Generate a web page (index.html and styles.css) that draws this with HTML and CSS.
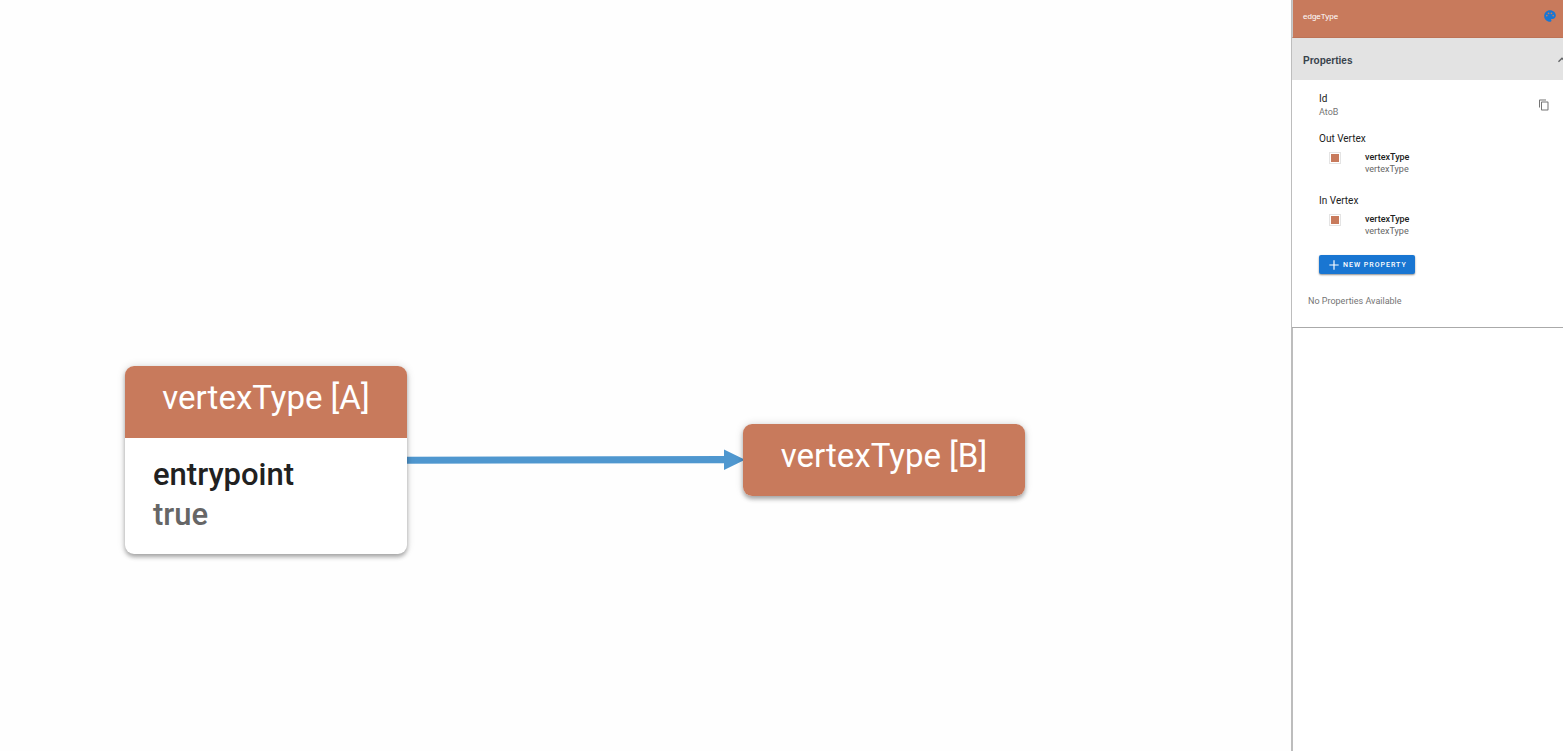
FILE: index.html
```html
<!DOCTYPE html>
<html lang="en">
<head>
<meta charset="utf-8">
<title>Graph editor</title>
<link rel="stylesheet" href="styles.css">
</head>
<body>
<main class="canvas">
  <svg class="edge" width="338" height="24" viewBox="0 0 338 24" aria-hidden="true">
    <path d="M0 8.700 317 8V1.500L338 11.700 317 22V15.200L0 15.800z" fill="#4f97cf"/>
  </svg>
  <article class="node node-a">
    <h2 class="node-title">vertexType [A]</h2>
    <dl class="node-body">
      <dt>entrypoint</dt>
      <dd>true</dd>
    </dl>
  </article>
  <article class="node node-b">
    <h2 class="node-title">vertexType [B]</h2>
  </article>
</main>
<aside class="panel">
  <header class="panel-header">
    <span>edgeType</span>
    <button class="icon-button" type="button" aria-label="Change color">
      <svg width="14" height="14" viewBox="0 0 24 24"><circle cx="12" cy="10" r="7" fill="#c87a5c"/><path fill="#1976d2" d="M12 2C6.490 2 2 6.490 2 12s4.490 10 10 10c1.380 0 2.500-1.120 2.500-2.500 0-.61-.23-1.200-.64-1.670-.08-.1-.13-.21-.13-.33 0-.28.22-.5.5-.5H16c3.310 0 6-2.690 6-6C22 6.040 17.510 2 12 2zm5.500 11c-.83 0-1.500-.67-1.500-1.500s.67-1.500 1.500-1.500 1.500.67 1.500 1.500-.67 1.500-1.500 1.500zm-3-4c-.83 0-1.500-.67-1.500-1.500S13.670 6 14.500 6s1.500.67 1.500 1.500S15.330 9 14.500 9zM5 11.500c0-.83.67-1.500 1.500-1.500s1.500.67 1.500 1.500S7.330 13 6.500 13 5 12.330 5 11.500zm6-4c0 .83-.67 1.500-1.500 1.500S8 8.330 8 7.500 8.670 6 9.500 6s1.500.67 1.500 1.500z"/></svg>
    </button>
  </header>
  <button class="section-toggle" type="button" aria-expanded="true">
    <span>Properties</span>
    <svg class="chevron" width="16" height="16" viewBox="0 0 24 24" fill="#5f6163"><path d="m12 8-6 6 1.410 1.410L12 10.830l4.590 4.580L18 14z"/></svg>
  </button>
  <section class="properties">
    <div class="id-row">
      <div>
        <h3 class="label">Id</h3>
        <p class="value">AtoB</p>
      </div>
      <button class="icon-button" type="button" aria-label="Copy id">
        <svg width="12" height="12" viewBox="0 0 24 24" fill="#757575"><path d="M16 1H4c-1.100 0-2 .9-2 2v14h2V3h12V1zm3 4H8c-1.100 0-2 .9-2 2v14c0 1.100.9 2 2 2h11c1.100 0 2-.9 2-2V7c0-1.100-.9-2-2-2zm0 16H8V7h11v14z"/></svg>
      </button>
    </div>
    <h3 class="label">Out Vertex</h3>
    <div class="vertex">
      <span class="swatch"></span>
      <div>
        <p class="vertex-name">vertexType</p>
        <p class="vertex-type">vertexType</p>
      </div>
    </div>
    <h3 class="label">In Vertex</h3>
    <div class="vertex">
      <span class="swatch"></span>
      <div>
        <p class="vertex-name">vertexType</p>
        <p class="vertex-type">vertexType</p>
      </div>
    </div>
    <button class="new-property" type="button">
      <svg width="14" height="14" viewBox="0 0 24 24" fill="#fff"><path d="M20 13h-7v7h-2v-7H4v-2h7V4h2v7h7z"/></svg>
      <span>New Property</span>
    </button>
    <p class="empty">No Properties Available</p>
  </section>
  <div class="panel-rest"></div>
</aside>
</body>
</html>
```
FILE: styles.css
```css
* {
  box-sizing: border-box;
}

body {
  display: flex;
  min-height: 100vh;
  margin: 0;
  background: #fff;
  color: #212121;
  font-family: Roboto, sans-serif;
}

h2, h3, p, dl, dd {
  margin: 0;
}

button {
  padding: 0;
  border: 0;
  background: none;
  font: inherit;
}

svg {
  display: block;
  flex: none;
}

.canvas {
  position: relative;
  flex: 1;
  min-width: 0;
  overflow: hidden;
  background: #fefefe;
}

.edge {
  position: absolute;
  top: 448px;
  left: 407px;
}

.node {
  position: absolute;
  width: 282px;
  overflow: hidden;
  border-radius: 9px;
  background: #fff;
  box-shadow: 0 3px 4px rgba(0, 0, 0, .3), 0 0 8px rgba(0, 0, 0, .14);
}

.node-a {
  top: 366px;
  left: 125px;
}

.node-b {
  top: 424px;
  left: 743px;
}

.node-title {
  height: 72px;
  padding-top: 12px;
  background: #c87a5c;
  color: #fff;
  font-size: 33px;
  font-weight: 400;
  line-height: 39px;
  text-align: center;
}

.node-body {
  padding: 17px 28px 19px;
  font-size: 31px;
  font-weight: 500;
  line-height: 40px;
}

.node-body dd {
  color: #666;
}

.panel {
  display: flex;
  flex: 0 0 272px;
  flex-direction: column;
  overflow: hidden;
  border-left: 1px solid #bdbdbd;
}

.panel-header {
  display: flex;
  align-items: center;
  justify-content: space-between;
  height: 38px;
  padding: 0 6px 5px 10px;
  border-left: 1px solid #c8c8c8;
  border-bottom: 1px solid #bd7357;
  background: #c87a5c;
  color: #fff;
  font-family: "Liberation Sans", Arial, sans-serif;
  font-size: 8px;
}

.section-toggle {
  display: flex;
  align-items: center;
  justify-content: space-between;
  height: 42px;
  padding: 2px 0 0 11px;
  background: #e3e3e3;
  color: #37424c;
  font-family: "Liberation Sans", Arial, sans-serif;
  font-size: 10px;
  font-weight: 700;
}

.chevron {
  margin-right: -7px;
}

.properties {
  padding: 12px 13px 19px 27px;
  border-bottom: 1px solid #aaa;
}

.id-row {
  display: flex;
  align-items: center;
  justify-content: space-between;
  margin-bottom: 14px;
}

.label {
  font-size: 10px;
  font-weight: 400;
  line-height: 14px;
}

.value {
  color: #757575;
  font-size: 9px;
  line-height: 12px;
}

.vertex {
  display: flex;
  gap: 24px;
  margin: 5px 0 18px 10px;
  font-size: 9px;
  font-weight: 500;
  line-height: 12px;
}

.vertex + .label {
  margin-top: 19px;
}

.swatch {
  width: 12px;
  height: 12px;
  margin-top: 1px;
  padding: 1px;
  border: 1px solid #e4e4e4;
  background: #c87a5c content-box;
}

.vertex-type {
  color: #666;
  font-weight: 400;
}

.new-property {
  display: flex;
  gap: 2px;
  align-items: center;
  height: 19px;
  padding: 0 8px;
  border-radius: 2px;
  background: #1976d2;
  box-shadow: 0 1px 2px rgba(0, 0, 0, .45);
  color: #fff;
  font-size: 7px;
  font-weight: 500;
  letter-spacing: 1px;
  text-transform: uppercase;
}

.empty {
  margin: 20px 0 0 -11px;
  color: #757575;
  font-size: 9px;
  line-height: 14px;
}

.panel-rest {
  flex: 1;
  border-left: 1px solid #bdbdbd;
}
```
